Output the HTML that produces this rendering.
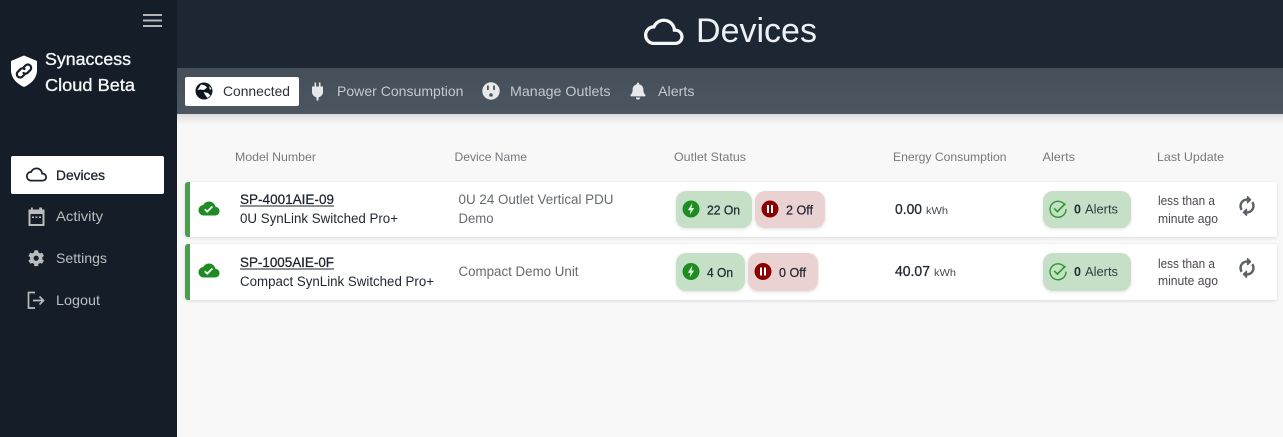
<!DOCTYPE html>
<html lang="en"><head><meta charset="utf-8"><title>Devices</title>
<style>
html,body{margin:0;padding:0;width:1283px;height:437px;overflow:hidden;background:#f8f8f8}
svg{display:block}
text{font-family:"Liberation Sans",sans-serif;white-space:pre}
</style></head><body>
<svg width="1283" height="437" viewBox="0 0 1283 437" xmlns="http://www.w3.org/2000/svg">
<defs>
<linearGradient id="tb" x1="0" y1="0" x2="0" y2="1"><stop offset="0" stop-color="#454f5a"/><stop offset="1" stop-color="#4c5660"/></linearGradient>
<linearGradient id="sh" x1="0" y1="0" x2="0" y2="1"><stop offset="0" stop-color="#dcdcdc"/><stop offset="1" stop-color="#f8f8f8"/></linearGradient>
<filter id="ps" x="-5%" y="-10%" width="110%" height="125%"><feDropShadow dx="0" dy="1" stdDeviation="1.5" flood-color="#000" flood-opacity=".12"/></filter>
<path id="cloud" d="M19.35 10.04C18.67 6.59 15.64 4 12 4 9.11 4 6.6 5.64 5.35 8.04 2.34 8.36 0 10.91 0 14c0 3.31 2.69 6 6 6h13c2.76 0 5-2.24 5-5 0-2.64-2.05-4.78-4.65-4.96zM19 18H6c-2.21 0-4-1.79-4-4s1.79-4 4-4h.71C7.37 7.69 9.48 6 12 6c3.04 0 5.5 2.46 5.5 5.5v.5H19c1.66 0 3 1.34 3 3s-1.34 3-3 3z"/>
<path id="done" d="M19.35 10.04C18.67 6.59 15.64 4 12 4 9.11 4 6.6 5.64 5.35 8.04 2.34 8.36 0 10.91 0 14c0 3.31 2.69 6 6 6h13c2.76 0 5-2.24 5-5 0-2.64-2.05-4.78-4.65-4.96zM10 17l-3.5-3.5 1.41-1.41L10 14.17 15.18 9l1.41 1.41L10 17z"/>
<path id="sync" d="M370.72 133.28C339.458 104.008 298.888 87.962 255.848 88c-77.458.068-144.328 53.178-162.791 126.85-1.344 5.363-6.122 9.15-11.651 9.15H24.103c-7.498 0-13.194-6.807-11.807-14.176C33.933 94.924 134.813 8 256 8c66.448 0 126.791 26.136 171.315 68.685L463.03 40.97C478.149 25.851 504 36.559 504 57.941V192c0 13.255-10.745 24-24 24H345.941c-21.382 0-32.09-25.851-16.971-40.971l41.75-41.749zM32 296h134.059c21.382 0 32.09 25.851 16.971 40.971l-41.75 41.75c31.262 29.273 71.835 45.319 114.876 45.28 77.418-.07 144.315-53.144 162.787-126.849 1.344-5.363 6.122-9.15 11.651-9.15h57.304c7.498 0 13.194 6.807 11.807 14.176C478.067 417.076 377.187 504 256 504c-66.448 0-126.791-26.136-171.315-68.685L48.97 471.03C33.851 486.149 8 475.441 8 454.059V320c0-13.255 10.745-24 24-24z"/>
<g id="bolt"><path fill="#dff0df" d="M1.4-6-3.2 1.200h2.700L-1.400 6 3.200-1h-2.700z"/></g>
<g id="check"><path d="M7 -3.6A8 8 0 1 0 8 0" fill="none" stroke="#2a9a2a" stroke-width="1.4"/><path d="M-3.8-.6-.6 2.600 7.400-5.600" fill="none" stroke="#2a9a2a" stroke-width="1.600"/></g>
</defs>

<rect width="1283" height="437" fill="#f8f8f8"/>
<rect x="177" y="114" width="1106" height="10" fill="url(#sh)"/>
<!-- header -->
<rect x="177" width="1106" height="68" fill="#1d2733"/>
<rect x="177" y="68" width="1106" height="46" fill="url(#tb)"/>
<!-- sidebar -->
<rect width="177" height="437" fill="#151d28"/>
<rect x="143" y="14" width="19" height="2" fill="#b4b6b9"/><rect x="143" y="19.500" width="19" height="2" fill="#b4b6b9"/><rect x="143" y="25" width="19" height="2" fill="#b4b6b9"/>
<!-- logo -->
<path fill="#fff" d="M24 55.500 37 61v9c0 8-5.500 13.500-13 17-7.500-3.500-13-9-13-17v-9z"/>
<g fill="none" stroke="#151d28" stroke-width="2.200" stroke-linecap="round"><path d="M23.500 67.500l2-2a3.300 3.300 0 0 1 4.700 4.700l-2.500 2.500a3.300 3.300 0 0 1-4.200.3"/><path d="M24.500 74.500l-2 2a3.300 3.300 0 0 1-4.700-4.700l2.500-2.500a3.300 3.300 0 0 1 4.200-.3"/></g>
<text x="45" y="65" font-size="17.500" fill="#f4f5f6" stroke="#f4f5f6" stroke-width=".35" textLength="86" lengthAdjust="spacingAndGlyphs">Synaccess</text>
<text x="45" y="91" font-size="17.500" fill="#f4f5f6" stroke="#f4f5f6" stroke-width=".35" textLength="90" lengthAdjust="spacingAndGlyphs">Cloud Beta</text>
<!-- nav -->
<rect x="11" y="156" width="153" height="38" rx="2" fill="#fff"/>
<use href="#cloud" transform="translate(26 164) scale(.875)" fill="#1b232e"/>
<text x="56" y="180" font-size="14" fill="#1b232e" stroke="#1b232e" stroke-width=".3" textLength="49" lengthAdjust="spacingAndGlyphs">Devices</text>
<path fill="#b9bbbe" d="M31 207.500h1.800v2h6.400v-2H42v2h2.500v16.500h-16v-16.500H31zM30.500 214v10h12v-10z"/>
<rect x="32" y="216.500" width="2" height="1.500" fill="#b9bbbe"/><rect x="35.500" y="216.500" width="2" height="1.500" fill="#b9bbbe"/><rect x="39" y="216.500" width="2" height="1.500" fill="#b9bbbe"/>
<text x="56" y="221" font-size="14" fill="#bcbec1" textLength="47" lengthAdjust="spacingAndGlyphs">Activity</text>
<path fill="#b9bbbe" transform="translate(28 250) scale(.032)" d="M487.400 315.700l-42.600-24.600c4.300-23.200 4.300-47 0-70.200l42.600-24.600c4.900-2.800 7.100-8.600 5.500-14-11.100-35.600-30-67.800-54.700-94.600-3.800-4.100-10-5.100-14.800-2.300L380.800 110c-17.900-15.400-38.500-27.300-60.800-35.100V25.800c0-5.600-3.900-10.500-9.400-11.700-36.700-8.200-74.300-7.800-109.200 0-5.500 1.200-9.400 6.100-9.400 11.700V75c-22.200 7.900-42.800 19.800-60.800 35.100L88.700 85.500c-4.900-2.800-11-1.900-14.800 2.300-24.700 26.700-43.600 58.900-54.700 94.600-1.700 5.400.6 11.200 5.500 14L67.300 221c-4.300 23.200-4.300 47 0 70.200l-42.600 24.600c-4.900 2.800-7.100 8.600-5.500 14 11.100 35.600 30 67.800 54.700 94.600 3.800 4.100 10 5.100 14.800 2.300l42.600-24.600c17.900 15.400 38.500 27.300 60.800 35.100v49.200c0 5.600 3.900 10.500 9.400 11.700 36.700 8.200 74.300 7.800 109.200 0 5.500-1.200 9.400-6.100 9.400-11.700v-49.200c22.200-7.900 42.800-19.800 60.800-35.100l42.600 24.600c4.900 2.800 11 1.900 14.800-2.300 24.700-26.700 43.600-58.900 54.700-94.600 1.500-5.500-.7-11.300-5.600-14.100zM256 336c-44.100 0-80-35.900-80-80s35.900-80 80-80 80 35.900 80 80-35.900 80-80 80z"/>
<text x="56" y="263" font-size="14" fill="#bcbec1" textLength="51" lengthAdjust="spacingAndGlyphs">Settings</text>
<g fill="none" stroke="#b9bbbe" stroke-width="1.700"><path d="M35 292.500h-6.500v15.500H35"/><path d="M33 300.500h10.500M39.500 296.500l4 4-4 4"/></g>
<text x="56" y="305" font-size="14" fill="#bcbec1" textLength="44" lengthAdjust="spacingAndGlyphs">Logout</text>

<!-- title -->
<use href="#cloud" transform="translate(644 12) scale(1.650)" fill="#f4f6f8"/>
<text x="696" y="42" font-size="34" fill="#eef1f4" textLength="121" lengthAdjust="spacingAndGlyphs">Devices</text>

<!-- tabs -->
<rect x="185" y="77" width="114" height="29" rx="2" fill="#fff"/>
<circle cx="204" cy="91" r="8.500" fill="#10161f"/>
<path fill="#fff" d="M201 84.500l4 1 2 2-3 2.500-3.500-.5-3 .5zM203.500 92l4.500 1 2.500 2.500-3 2.500-2-2.500zM209 86l2.500 2.500-1.500 1.500z"/>
<text x="223" y="96" font-size="14" fill="#2a323c" textLength="67" lengthAdjust="spacingAndGlyphs">Connected</text>
<path fill="#e6e8ea" d="M314.500 82.500h1.600v4h2.800v-4h1.600v4h2.500v5.500c0 3-2.500 5-4.500 5.400v3.100h-2v-3.100c-2-.4-4.500-2.400-4.500-5.400v-5.500h2.500z"/>
<text x="337" y="96" font-size="14" fill="#c5c8cb" textLength="126.500" lengthAdjust="spacingAndGlyphs">Power Consumption</text>
<circle cx="491" cy="91" r="8.700" fill="#e8e9eb"/>
<rect x="487" y="85.500" width="1.800" height="4.500" fill="#4a545f"/><rect x="493.200" y="85.500" width="1.800" height="4.500" fill="#4a545f"/><path fill="#4a545f" d="M489.300 96.500v-1.500a1.700 1.700 0 0 1 3.400 0v1.500z"/>
<text x="510" y="96" font-size="14" fill="#c5c8cb" textLength="100.500" lengthAdjust="spacingAndGlyphs">Manage Outlets</text>
<path fill="#e6e8ea" transform="translate(630.500 82.500) scale(.0335)" d="M224 512c35.320 0 63.970-28.650 63.970-64H160.030c0 35.350 28.650 64 63.970 64zm215.390-149.710c-19.320-20.760-55.470-51.990-55.470-154.290 0-77.700-54.480-139.900-127.940-155.160V32c0-17.670-14.320-32-31.980-32s-31.980 14.330-31.980 32v20.840C118.560 68.100 64.080 130.300 64.080 208c0 102.300-36.150 133.530-55.470 154.290-6 6.450-8.660 14.160-8.610 21.710.11 16.400 12.980 32 32.100 32h383.800c19.120 0 32-15.600 32.100-32 .05-7.550-2.610-15.270-8.610-21.710z"/>
<text x="658" y="96" font-size="14" fill="#c5c8cb" textLength="36.500" lengthAdjust="spacingAndGlyphs">Alerts</text>

<!-- table headers -->
<g font-size="12" fill="#76797d">
<text x="235" y="161" textLength="81" lengthAdjust="spacingAndGlyphs">Model Number</text>
<text x="454.500" y="161" textLength="72.500" lengthAdjust="spacingAndGlyphs">Device Name</text>
<text x="674" y="161" textLength="72" lengthAdjust="spacingAndGlyphs">Outlet Status</text>
<text x="893" y="161" textLength="113.500" lengthAdjust="spacingAndGlyphs">Energy Consumption</text>
<text x="1042.500" y="161" textLength="32.500" lengthAdjust="spacingAndGlyphs">Alerts</text>
<text x="1157" y="161" textLength="67" lengthAdjust="spacingAndGlyphs">Last Update</text>
</g>

<!-- row 1 -->
<rect x="185" y="182" width="1092" height="55" rx="3" fill="#fff" filter="url(#ps)"/>
<path d="M188 182h2v55h-2a3 3 0 0 1-3-3v-49a3 3 0 0 1 3-3z" fill="#499d4c"/>
<use href="#done" transform="translate(198.500 198) scale(.875)" fill="#1f8c23"/>
<text x="240" y="204" font-size="14" fill="#1b232e" stroke="#1b232e" stroke-width=".25" textLength="94" lengthAdjust="spacingAndGlyphs">SP-4001AIE-09</text>
<rect x="240" y="205.500" width="94" height="1" fill="#1b232e"/>
<text x="240" y="223" font-size="13.500" fill="#222a34" textLength="158" lengthAdjust="spacingAndGlyphs">0U SynLink Switched Pro+</text>
<text x="458.500" y="204" font-size="13.500" fill="#666a6f" textLength="155" lengthAdjust="spacingAndGlyphs">0U 24 Outlet Vertical PDU</text>
<text x="458.500" y="223" font-size="13.500" fill="#666a6f" textLength="35" lengthAdjust="spacingAndGlyphs">Demo</text>
<rect x="676" y="191" width="76" height="37" rx="10" fill="#c5e0c6" filter="url(#ps)"/>
<circle cx="691" cy="209" r="8.500" fill="#1f8c23"/><use href="#bolt" x="691" y="209"/>
<text x="707" y="214.500" font-size="12.500" fill="#222a34" stroke="#222a34" stroke-width=".25" textLength="33" lengthAdjust="spacingAndGlyphs">22 On</text>
<rect x="755" y="191" width="70" height="37" rx="10" fill="#ebd2d2" filter="url(#ps)"/>
<circle cx="770" cy="209" r="8.500" fill="#8b0000"/><rect x="767" y="205" width="2" height="8" fill="#fff"/><rect x="771" y="205" width="2" height="8" fill="#fff"/>
<text x="786" y="214.500" font-size="12.500" fill="#222a34" stroke="#222a34" stroke-width=".25" textLength="27" lengthAdjust="spacingAndGlyphs">2 Off</text>
<text x="895" y="214" font-size="14.500" fill="#222a34" stroke="#222a34" stroke-width=".3" textLength="27" lengthAdjust="spacingAndGlyphs">0.00</text>
<text x="926" y="214" font-size="10.500" fill="#444a52" textLength="22" lengthAdjust="spacingAndGlyphs">kWh</text>
<rect x="1043" y="191" width="88" height="37" rx="10" fill="#c5e0c6" filter="url(#ps)"/>
<use href="#check" x="1058" y="209"/>
<text x="1074" y="213.500" font-size="12.500" font-weight="700" fill="#222a34">0</text>
<text x="1085" y="213.500" font-size="12.500" fill="#333a44" textLength="33" lengthAdjust="spacingAndGlyphs">Alerts</text>
<text x="1158" y="205" font-size="12.500" fill="#4c4650" textLength="57" lengthAdjust="spacingAndGlyphs">less than a</text>
<text x="1158" y="223" font-size="12.500" fill="#4c4650" textLength="60" lengthAdjust="spacingAndGlyphs">minute ago</text>
<use href="#sync" transform="translate(1247 206) rotate(-45) scale(.031) translate(-256 -256)" fill="#5d6268"/>

<!-- row 2 -->
<rect x="185" y="244" width="1092" height="56" rx="3" fill="#fff" filter="url(#ps)"/>
<path d="M188 244h2v56h-2a3 3 0 0 1-3-3v-50a3 3 0 0 1 3-3z" fill="#499d4c"/>
<use href="#done" transform="translate(198.500 260) scale(.875)" fill="#1f8c23"/>
<text x="240" y="267" font-size="14" fill="#1b232e" stroke="#1b232e" stroke-width=".25" textLength="94" lengthAdjust="spacingAndGlyphs">SP-1005AIE-0F</text>
<rect x="240" y="268.500" width="94" height="1" fill="#1b232e"/>
<text x="240" y="286" font-size="13.500" fill="#222a34" textLength="194" lengthAdjust="spacingAndGlyphs">Compact SynLink Switched Pro+</text>
<text x="458.500" y="276" font-size="13.500" fill="#666a6f" textLength="120" lengthAdjust="spacingAndGlyphs">Compact Demo Unit</text>
<rect x="676" y="253" width="69" height="38" rx="10" fill="#c5e0c6" filter="url(#ps)"/>
<circle cx="691" cy="271.500" r="8.500" fill="#1f8c23"/><use href="#bolt" x="691" y="271.500"/>
<text x="707" y="277" font-size="12.500" fill="#222a34" stroke="#222a34" stroke-width=".25" textLength="26" lengthAdjust="spacingAndGlyphs">4 On</text>
<rect x="748" y="253" width="70" height="38" rx="10" fill="#ebd2d2" filter="url(#ps)"/>
<circle cx="763" cy="271.500" r="8.500" fill="#8b0000"/><rect x="760" y="267.500" width="2" height="8" fill="#fff"/><rect x="764" y="267.500" width="2" height="8" fill="#fff"/>
<text x="779" y="277" font-size="12.500" fill="#222a34" stroke="#222a34" stroke-width=".25" textLength="27" lengthAdjust="spacingAndGlyphs">0 Off</text>
<text x="895" y="276" font-size="14.500" fill="#222a34" stroke="#222a34" stroke-width=".3" textLength="35" lengthAdjust="spacingAndGlyphs">40.07</text>
<text x="934" y="276" font-size="10.500" fill="#444a52" textLength="22" lengthAdjust="spacingAndGlyphs">kWh</text>
<rect x="1043" y="253" width="88" height="38" rx="10" fill="#c5e0c6" filter="url(#ps)"/>
<use href="#check" x="1058" y="271.500"/>
<text x="1074" y="276" font-size="12.500" font-weight="700" fill="#222a34">0</text>
<text x="1085" y="276" font-size="12.500" fill="#333a44" textLength="33" lengthAdjust="spacingAndGlyphs">Alerts</text>
<text x="1158" y="268" font-size="12.500" fill="#4c4650" textLength="57" lengthAdjust="spacingAndGlyphs">less than a</text>
<text x="1158" y="285" font-size="12.500" fill="#4c4650" textLength="60" lengthAdjust="spacingAndGlyphs">minute ago</text>
<use href="#sync" transform="translate(1247 268) rotate(-45) scale(.031) translate(-256 -256)" fill="#5d6268"/>
</svg>
</body></html>
